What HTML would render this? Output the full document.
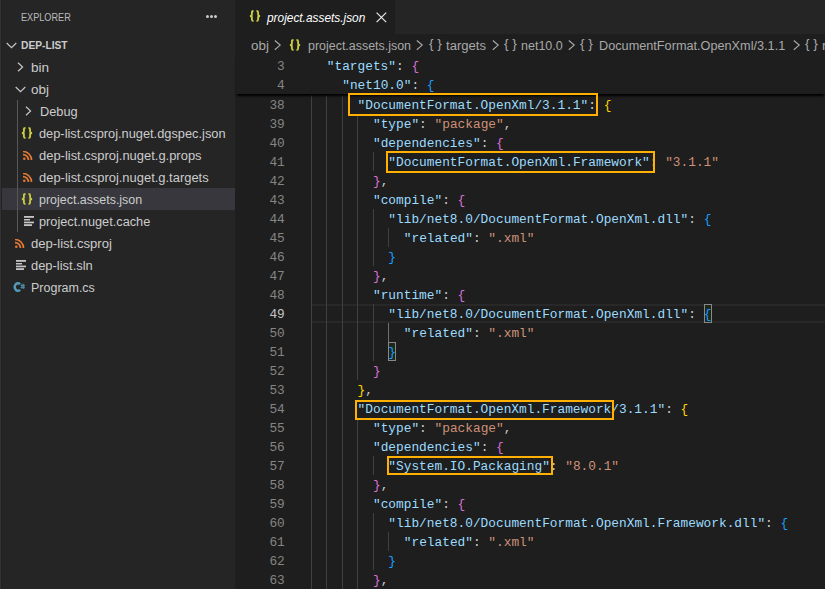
<!DOCTYPE html>
<html><head><meta charset="utf-8"><style>
html,body{margin:0;padding:0;width:825px;height:589px;overflow:hidden;background:#1e1e1e}
body{position:relative;font-family:"Liberation Sans",sans-serif}
.a{position:absolute}
.si{position:absolute;height:22px;line-height:22px;font-size:13.7px;color:#cccccc;white-space:pre;transform-origin:0 0}
.cl{position:absolute;height:19px;line-height:19px;font-family:"Liberation Mono",monospace;font-size:12.826px;white-space:pre;color:#cccccc}
.ln{position:absolute;left:240px;width:44.8px;text-align:right;height:19px;line-height:19px;font-family:"Liberation Mono",monospace;font-size:12.826px;white-space:pre}
.ig{position:absolute;width:1px}
.ob{position:absolute;border:2px solid #ffb000}
.ji{position:absolute;font-family:"Liberation Mono",monospace;font-weight:bold;font-size:12px;line-height:14px;color:#cbcb41;letter-spacing:-1px}
.tt{position:absolute;height:35px;line-height:35px;font-size:13px;font-style:italic;color:#ffffff;white-space:pre;transform-origin:0 0}
.bc{position:absolute;top:34.6px;height:22px;line-height:22px;font-size:13.7px;color:#a9a9a9;white-space:pre;transform-origin:0 0}
</style></head><body>
<!-- sidebar -->
<div class="a" style="left:0;top:0;width:235px;height:589px;background:#252526">
<div class="a" style="left:21px;top:0;height:35px;line-height:35px;font-size:11px;color:#bbbbbb;transform:scaleX(0.83);transform-origin:0 0">EXPLORER</div>
<div class="a" style="left:205.9px;top:15.1px;width:3px;height:3px;border-radius:50%;background:#cccccc"></div>
<div class="a" style="left:209.9px;top:15.1px;width:3px;height:3px;border-radius:50%;background:#cccccc"></div>
<div class="a" style="left:213.9px;top:15.1px;width:3px;height:3px;border-radius:50%;background:#cccccc"></div>
<svg style="position:absolute;left:5.6px;top:41.9px" width="11" height="7" viewBox="0 0 11 7"><path d="M0.7 1 L5.5 5.6 L10.3 1" stroke="#c5c5c5" stroke-width="1.2" fill="none"/></svg>
<div class="a" style="left:21px;top:34px;height:22px;line-height:22px;font-size:11px;font-weight:bold;color:#cccccc;transform:scaleX(0.93);transform-origin:0 0">DEP-LIST</div>
<div style="position:absolute;left:0;top:188px;width:235px;height:22px;background:#37373d"></div>
<div style="position:absolute;left:17px;top:100px;width:1px;height:132px;background:#585858"></div>
<svg style="position:absolute;left:17px;top:62px" width="7" height="10" viewBox="0 0 7 10"><path d="M1 0.7 L5.6 5 L1 9.3" stroke="#c5c5c5" stroke-width="1.2" fill="none"/></svg>
<div class="si" style="left:31px;top:57px;transform:scaleX(0.9901);">bin</div>
<svg style="position:absolute;left:14.5px;top:85.7px" width="11" height="7" viewBox="0 0 11 7"><path d="M0.7 1 L5.5 5.6 L10.3 1" stroke="#c5c5c5" stroke-width="1.2" fill="none"/></svg>
<div class="si" style="left:31px;top:79px;transform:scaleX(0.9846);">obj</div>
<svg style="position:absolute;left:24.5px;top:105.8px" width="7" height="10" viewBox="0 0 7 10"><path d="M1 0.7 L5.6 5 L1 9.3" stroke="#c5c5c5" stroke-width="1.2" fill="none"/></svg>
<div class="si" style="left:39.5px;top:101px;transform:scaleX(0.9314);">Debug</div>
<svg style="position:absolute;left:21px;top:127px" width="12" height="12" viewBox="0 0 12 12" preserveAspectRatio="none"><path d="M4.5 1 Q2.9 1 2.9 2.5 V4.5 Q2.9 6 0.9 6 Q2.9 6 2.9 7.5 V9.5 Q2.9 11 4.5 11 M7.5 1 Q9.1 1 9.1 2.5 V4.5 Q9.1 6 11.1 6 Q9.1 6 9.1 7.5 V9.5 Q9.1 11 7.5 11" stroke="#cbcb41" stroke-width="1.85" fill="none"/></svg>
<div class="si" style="left:39.3px;top:123px;transform:scaleX(0.9357);">dep-list.csproj.nuget.dgspec.json</div>
<svg style="position:absolute;left:22.5px;top:151px" width="10" height="9" viewBox="0 0 10 9"><path d="M0 0.5 A8.5 8.5 0 0 1 8.5 9" stroke="#e37933" stroke-width="1.7" fill="none"/><path d="M0 3.6 A5.4 5.4 0 0 1 5.4 9" stroke="#e37933" stroke-width="1.7" fill="none"/><circle cx="1.3" cy="7.7" r="1.3" fill="#e37933"/></svg>
<div class="si" style="left:39.3px;top:145px;transform:scaleX(0.9453);">dep-list.csproj.nuget.g.props</div>
<svg style="position:absolute;left:22.5px;top:173px" width="10" height="9" viewBox="0 0 10 9"><path d="M0 0.5 A8.5 8.5 0 0 1 8.5 9" stroke="#e37933" stroke-width="1.7" fill="none"/><path d="M0 3.6 A5.4 5.4 0 0 1 5.4 9" stroke="#e37933" stroke-width="1.7" fill="none"/><circle cx="1.3" cy="7.7" r="1.3" fill="#e37933"/></svg>
<div class="si" style="left:39.3px;top:167px;transform:scaleX(0.9448);">dep-list.csproj.nuget.g.targets</div>
<svg style="position:absolute;left:21px;top:193px" width="12" height="12" viewBox="0 0 12 12" preserveAspectRatio="none"><path d="M4.5 1 Q2.9 1 2.9 2.5 V4.5 Q2.9 6 0.9 6 Q2.9 6 2.9 7.5 V9.5 Q2.9 11 4.5 11 M7.5 1 Q9.1 1 9.1 2.5 V4.5 Q9.1 6 11.1 6 Q9.1 6 9.1 7.5 V9.5 Q9.1 11 7.5 11" stroke="#cbcb41" stroke-width="1.85" fill="none"/></svg>
<div class="si" style="left:39.3px;top:189px;transform:scaleX(0.9105);">project.assets.json</div>
<svg style="position:absolute;left:24.2px;top:216px" width="10" height="10" viewBox="0 0 10 10"><rect x="0" y="0" width="10" height="1.8" fill="#c5c5c5"/><rect x="0" y="3" width="6" height="1.5" fill="#c5c5c5"/><rect x="0" y="5.6" width="10" height="1.7" fill="#c5c5c5"/><rect x="0" y="8.2" width="8" height="1.8" fill="#c5c5c5"/></svg>
<div class="si" style="left:39.3px;top:211px;transform:scaleX(0.9316);">project.nuget.cache</div>
<svg style="position:absolute;left:15px;top:239px" width="10" height="9" viewBox="0 0 10 9"><path d="M0 0.5 A8.5 8.5 0 0 1 8.5 9" stroke="#e37933" stroke-width="1.7" fill="none"/><path d="M0 3.6 A5.4 5.4 0 0 1 5.4 9" stroke="#e37933" stroke-width="1.7" fill="none"/><circle cx="1.3" cy="7.7" r="1.3" fill="#e37933"/></svg>
<div class="si" style="left:31.1px;top:233px;transform:scaleX(0.9572);">dep-list.csproj</div>
<svg style="position:absolute;left:16.1px;top:260px" width="10" height="10" viewBox="0 0 10 10"><rect x="0" y="0" width="10" height="1.8" fill="#c5c5c5"/><rect x="0" y="3" width="6" height="1.5" fill="#c5c5c5"/><rect x="0" y="5.6" width="10" height="1.7" fill="#c5c5c5"/><rect x="0" y="8.2" width="8" height="1.8" fill="#c5c5c5"/></svg>
<div class="si" style="left:31.1px;top:255px;transform:scaleX(0.9438);">dep-list.sln</div>
<svg style="position:absolute;left:12.5px;top:282px" width="13" height="11" viewBox="0 0 13 11"><path d="M7.0 2.3 A3.0 3.8 0 1 0 7.0 7.7" stroke="#519aba" stroke-width="2.5" fill="none"/><rect x="8.5" y="1.7" width="0.9" height="5.3" fill="#519aba"/><rect x="10.3" y="1.7" width="0.9" height="5.3" fill="#519aba"/><rect x="7.6" y="3.0" width="4.2" height="0.9" fill="#519aba"/><rect x="7.6" y="4.9" width="4.2" height="0.9" fill="#519aba"/></svg>
<div class="si" style="left:31.1px;top:277px;transform:scaleX(0.9123);">Program.cs</div>

<div class="a" style="left:0;top:0;width:1px;height:589px;background:#323232"></div>
<div class="a" style="left:1px;top:0;width:1px;height:589px;background:#232323"></div>
</div>
<!-- tabs -->
<div class="a" style="left:235px;top:0;width:590px;height:34px;background:#252526"></div>
<div class="a" style="left:235px;top:0;width:160px;height:34px;background:#1e1e1e"></div>
<svg style="position:absolute;left:248.5px;top:10px" width="12" height="12" viewBox="0 0 12 12" preserveAspectRatio="none"><path d="M4.5 1 Q2.9 1 2.9 2.5 V4.5 Q2.9 6 0.9 6 Q2.9 6 2.9 7.5 V9.5 Q2.9 11 4.5 11 M7.5 1 Q9.1 1 9.1 2.5 V4.5 Q9.1 6 11.1 6 Q9.1 6 9.1 7.5 V9.5 Q9.1 11 7.5 11" stroke="#cbcb41" stroke-width="1.85" fill="none"/></svg>
<div class="tt" style="left:266.9px;top:0px;transform:scaleX(0.9130);">project.assets.json</div>

<svg class="a" style="left:375.9px;top:12.1px" width="11" height="11" viewBox="0 0 11 11"><path d="M0.6 0.6 L10.2 10.2 M10.2 0.6 L0.6 10.2" stroke="#e8e8e8" stroke-width="1.2"/></svg>
<!-- breadcrumbs -->
<div class="bc" style="left:251.2px;top:34.6px;transform:scaleX(0.9792);">obj</div>

<svg style="position:absolute;left:274.2px;top:40px" width="8" height="11" viewBox="0 0 8 11"><path d="M0.8 0.5 L6.2 5.1 L0.8 9.7" stroke="#a9a9a9" stroke-width="1.15" fill="none"/></svg>
<svg style="position:absolute;left:289.2px;top:38.8px" width="12" height="12" viewBox="0 0 12 12" preserveAspectRatio="none"><path d="M4.5 1 Q2.9 1 2.9 2.5 V4.5 Q2.9 6 0.9 6 Q2.9 6 2.9 7.5 V9.5 Q2.9 11 4.5 11 M7.5 1 Q9.1 1 9.1 2.5 V4.5 Q9.1 6 11.1 6 Q9.1 6 9.1 7.5 V9.5 Q9.1 11 7.5 11" stroke="#cbcb41" stroke-width="1.85" fill="none"/></svg>
<div class="bc" style="left:307.9px;top:34.6px;transform:scaleX(0.9087);">project.assets.json</div>

<svg style="position:absolute;left:416px;top:40px" width="8" height="11" viewBox="0 0 8 11"><path d="M0.8 0.5 L6.2 5.1 L0.8 9.7" stroke="#a9a9a9" stroke-width="1.15" fill="none"/></svg>
<div class="bc" style="left:429px;top:32.6px">{ }</div>
<div class="bc" style="left:446px;top:34.6px;transform:scaleX(0.9550);">targets</div>

<svg style="position:absolute;left:492px;top:40px" width="8" height="11" viewBox="0 0 8 11"><path d="M0.8 0.5 L6.2 5.1 L0.8 9.7" stroke="#a9a9a9" stroke-width="1.15" fill="none"/></svg>
<div class="bc" style="left:504px;top:32.6px">{ }</div>
<div class="bc" style="left:521.2px;top:34.6px;transform:scaleX(0.9145);">net10.0</div>

<svg style="position:absolute;left:568.3px;top:40px" width="8" height="11" viewBox="0 0 8 11"><path d="M0.8 0.5 L6.2 5.1 L0.8 9.7" stroke="#a9a9a9" stroke-width="1.15" fill="none"/></svg>
<div class="bc" style="left:580px;top:32.6px">{ }</div>
<div class="bc" style="left:599.2px;top:34.6px;transform:scaleX(0.9273);">DocumentFormat.OpenXml/3.1.1</div>

<svg style="position:absolute;left:792.8px;top:40px" width="8" height="11" viewBox="0 0 8 11"><path d="M0.8 0.5 L6.2 5.1 L0.8 9.7" stroke="#a9a9a9" stroke-width="1.15" fill="none"/></svg>
<div class="bc" style="left:805px;top:32.6px">{ }</div>
<div class="bc" style="left:822px">r</div>
<!-- code -->
<div style="position:absolute;left:311.4px;top:304px;width:513.6px;height:15px;border-top:2px solid #282828;border-bottom:2px solid #282828"></div>
<div class="ig" style="left:311px;top:95px;height:494px;background:#404040"></div>
<div class="ig" style="left:326px;top:95px;height:494px;background:#404040"></div>
<div class="ig" style="left:342px;top:95px;height:494px;background:#404040"></div>
<div class="ig" style="left:357px;top:114px;height:266px;background:#404040"></div>
<div class="ig" style="left:357px;top:418px;height:171px;background:#404040"></div>
<div class="ig" style="left:373px;top:152px;height:19px;background:#404040"></div>
<div class="ig" style="left:373px;top:209px;height:57px;background:#404040"></div>
<div class="ig" style="left:373px;top:304px;height:57px;background:#404040"></div>
<div class="ig" style="left:373px;top:456px;height:19px;background:#404040"></div>
<div class="ig" style="left:373px;top:513px;height:57px;background:#404040"></div>
<div class="ig" style="left:388px;top:228px;height:19px;background:#404040"></div>
<div class="ig" style="left:388px;top:323px;height:19px;background:#404040"></div>
<div class="ig" style="left:388px;top:532px;height:19px;background:#404040"></div>
<div class="ig" style="left:388px;top:323px;height:19px;background:#707070"></div>
<div style="position:absolute;left:704px;top:304px;width:6px;height:17px;border:1px solid #888888;background:#1b281b"></div>
<div style="position:absolute;left:388px;top:342px;width:6px;height:17px;border:1px solid #888888;background:#1b281b"></div>
<div class="ln" style="top:95.8px;color:#858585">38</div>
<div class="cl" style="top:95.8px;left:357.58px"><span style="color:#9cdcfe">"DocumentFormat.OpenXml/3.1.1"</span><span style="color:#cccccc">: </span><span style="color:#ffd700">{</span></div>
<div class="ln" style="top:114.8px;color:#858585">39</div>
<div class="cl" style="top:114.8px;left:372.98px"><span style="color:#9cdcfe">"type"</span><span style="color:#cccccc">: </span><span style="color:#ce9178">"package"</span><span style="color:#cccccc">,</span></div>
<div class="ln" style="top:133.8px;color:#858585">40</div>
<div class="cl" style="top:133.8px;left:372.98px"><span style="color:#9cdcfe">"dependencies"</span><span style="color:#cccccc">: </span><span style="color:#da70d6">{</span></div>
<div class="ln" style="top:152.8px;color:#858585">41</div>
<div class="cl" style="top:152.8px;left:388.37px"><span style="color:#9cdcfe">"DocumentFormat.OpenXml.Framework"</span><span style="color:#cccccc">: </span><span style="color:#ce9178">"3.1.1"</span></div>
<div class="ln" style="top:171.8px;color:#858585">42</div>
<div class="cl" style="top:171.8px;left:372.98px"><span style="color:#da70d6">}</span><span style="color:#cccccc">,</span></div>
<div class="ln" style="top:190.8px;color:#858585">43</div>
<div class="cl" style="top:190.8px;left:372.98px"><span style="color:#9cdcfe">"compile"</span><span style="color:#cccccc">: </span><span style="color:#da70d6">{</span></div>
<div class="ln" style="top:209.8px;color:#858585">44</div>
<div class="cl" style="top:209.8px;left:388.37px"><span style="color:#9cdcfe">"lib/net8.0/DocumentFormat.OpenXml.dll"</span><span style="color:#cccccc">: </span><span style="color:#179fff">{</span></div>
<div class="ln" style="top:228.8px;color:#858585">45</div>
<div class="cl" style="top:228.8px;left:403.76px"><span style="color:#9cdcfe">"related"</span><span style="color:#cccccc">: </span><span style="color:#ce9178">".xml"</span></div>
<div class="ln" style="top:247.8px;color:#858585">46</div>
<div class="cl" style="top:247.8px;left:388.37px"><span style="color:#179fff">}</span></div>
<div class="ln" style="top:266.8px;color:#858585">47</div>
<div class="cl" style="top:266.8px;left:372.98px"><span style="color:#da70d6">}</span><span style="color:#cccccc">,</span></div>
<div class="ln" style="top:285.8px;color:#858585">48</div>
<div class="cl" style="top:285.8px;left:372.98px"><span style="color:#9cdcfe">"runtime"</span><span style="color:#cccccc">: </span><span style="color:#da70d6">{</span></div>
<div class="ln" style="top:304.8px;color:#c6c6c6">49</div>
<div class="cl" style="top:304.8px;left:388.37px"><span style="color:#9cdcfe">"lib/net8.0/DocumentFormat.OpenXml.dll"</span><span style="color:#cccccc">: </span><span style="color:#179fff">{</span></div>
<div class="ln" style="top:323.8px;color:#858585">50</div>
<div class="cl" style="top:323.8px;left:403.76px"><span style="color:#9cdcfe">"related"</span><span style="color:#cccccc">: </span><span style="color:#ce9178">".xml"</span></div>
<div class="ln" style="top:342.8px;color:#858585">51</div>
<div class="cl" style="top:342.8px;left:388.37px"><span style="color:#179fff">}</span></div>
<div class="ln" style="top:361.8px;color:#858585">52</div>
<div class="cl" style="top:361.8px;left:372.98px"><span style="color:#da70d6">}</span></div>
<div class="ln" style="top:380.8px;color:#858585">53</div>
<div class="cl" style="top:380.8px;left:357.58px"><span style="color:#ffd700">}</span><span style="color:#cccccc">,</span></div>
<div class="ln" style="top:399.8px;color:#858585">54</div>
<div class="cl" style="top:399.8px;left:357.58px"><span style="color:#9cdcfe">"DocumentFormat.OpenXml.Framework/3.1.1"</span><span style="color:#cccccc">: </span><span style="color:#ffd700">{</span></div>
<div class="ln" style="top:418.8px;color:#858585">55</div>
<div class="cl" style="top:418.8px;left:372.98px"><span style="color:#9cdcfe">"type"</span><span style="color:#cccccc">: </span><span style="color:#ce9178">"package"</span><span style="color:#cccccc">,</span></div>
<div class="ln" style="top:437.8px;color:#858585">56</div>
<div class="cl" style="top:437.8px;left:372.98px"><span style="color:#9cdcfe">"dependencies"</span><span style="color:#cccccc">: </span><span style="color:#da70d6">{</span></div>
<div class="ln" style="top:456.8px;color:#858585">57</div>
<div class="cl" style="top:456.8px;left:388.37px"><span style="color:#9cdcfe">"System.IO.Packaging"</span><span style="color:#cccccc">: </span><span style="color:#ce9178">"8.0.1"</span></div>
<div class="ln" style="top:475.8px;color:#858585">58</div>
<div class="cl" style="top:475.8px;left:372.98px"><span style="color:#da70d6">}</span><span style="color:#cccccc">,</span></div>
<div class="ln" style="top:494.8px;color:#858585">59</div>
<div class="cl" style="top:494.8px;left:372.98px"><span style="color:#9cdcfe">"compile"</span><span style="color:#cccccc">: </span><span style="color:#da70d6">{</span></div>
<div class="ln" style="top:513.8px;color:#858585">60</div>
<div class="cl" style="top:513.8px;left:388.37px"><span style="color:#9cdcfe">"lib/net8.0/DocumentFormat.OpenXml.Framework.dll"</span><span style="color:#cccccc">: </span><span style="color:#179fff">{</span></div>
<div class="ln" style="top:532.8px;color:#858585">61</div>
<div class="cl" style="top:532.8px;left:403.76px"><span style="color:#9cdcfe">"related"</span><span style="color:#cccccc">: </span><span style="color:#ce9178">".xml"</span></div>
<div class="ln" style="top:551.8px;color:#858585">62</div>
<div class="cl" style="top:551.8px;left:388.37px"><span style="color:#179fff">}</span></div>
<div class="ln" style="top:570.8px;color:#858585">63</div>
<div class="cl" style="top:570.8px;left:372.98px"><span style="color:#da70d6">}</span><span style="color:#cccccc">,</span></div>

<!-- sticky -->
<div class="a" style="left:236px;top:57px;width:589px;height:37px;background:#1e1e1e;box-shadow:0 3px 2px -1px #000000"></div>
<div class="ln" style="top:57px;color:#858585">3</div>
<div class="cl" style="top:57px;left:326.79px"><span style="color:#9cdcfe">"targets"</span><span style="color:#cccccc">: </span><span style="color:#da70d6">{</span></div>
<div class="ln" style="top:76px;color:#858585">4</div>
<div class="cl" style="top:76px;left:342.19px"><span style="color:#9cdcfe">"net10.0"</span><span style="color:#cccccc">: </span><span style="color:#179fff">{</span></div>

<div class="ob" style="left:348px;top:93px;width:246px;height:19px"></div>
<div class="ob" style="left:386px;top:151px;width:265px;height:18px"></div>
<div class="ob" style="left:355px;top:400px;width:255px;height:16px"></div>
<div class="ob" style="left:387px;top:456px;width:162px;height:15px"></div>

</body></html>
